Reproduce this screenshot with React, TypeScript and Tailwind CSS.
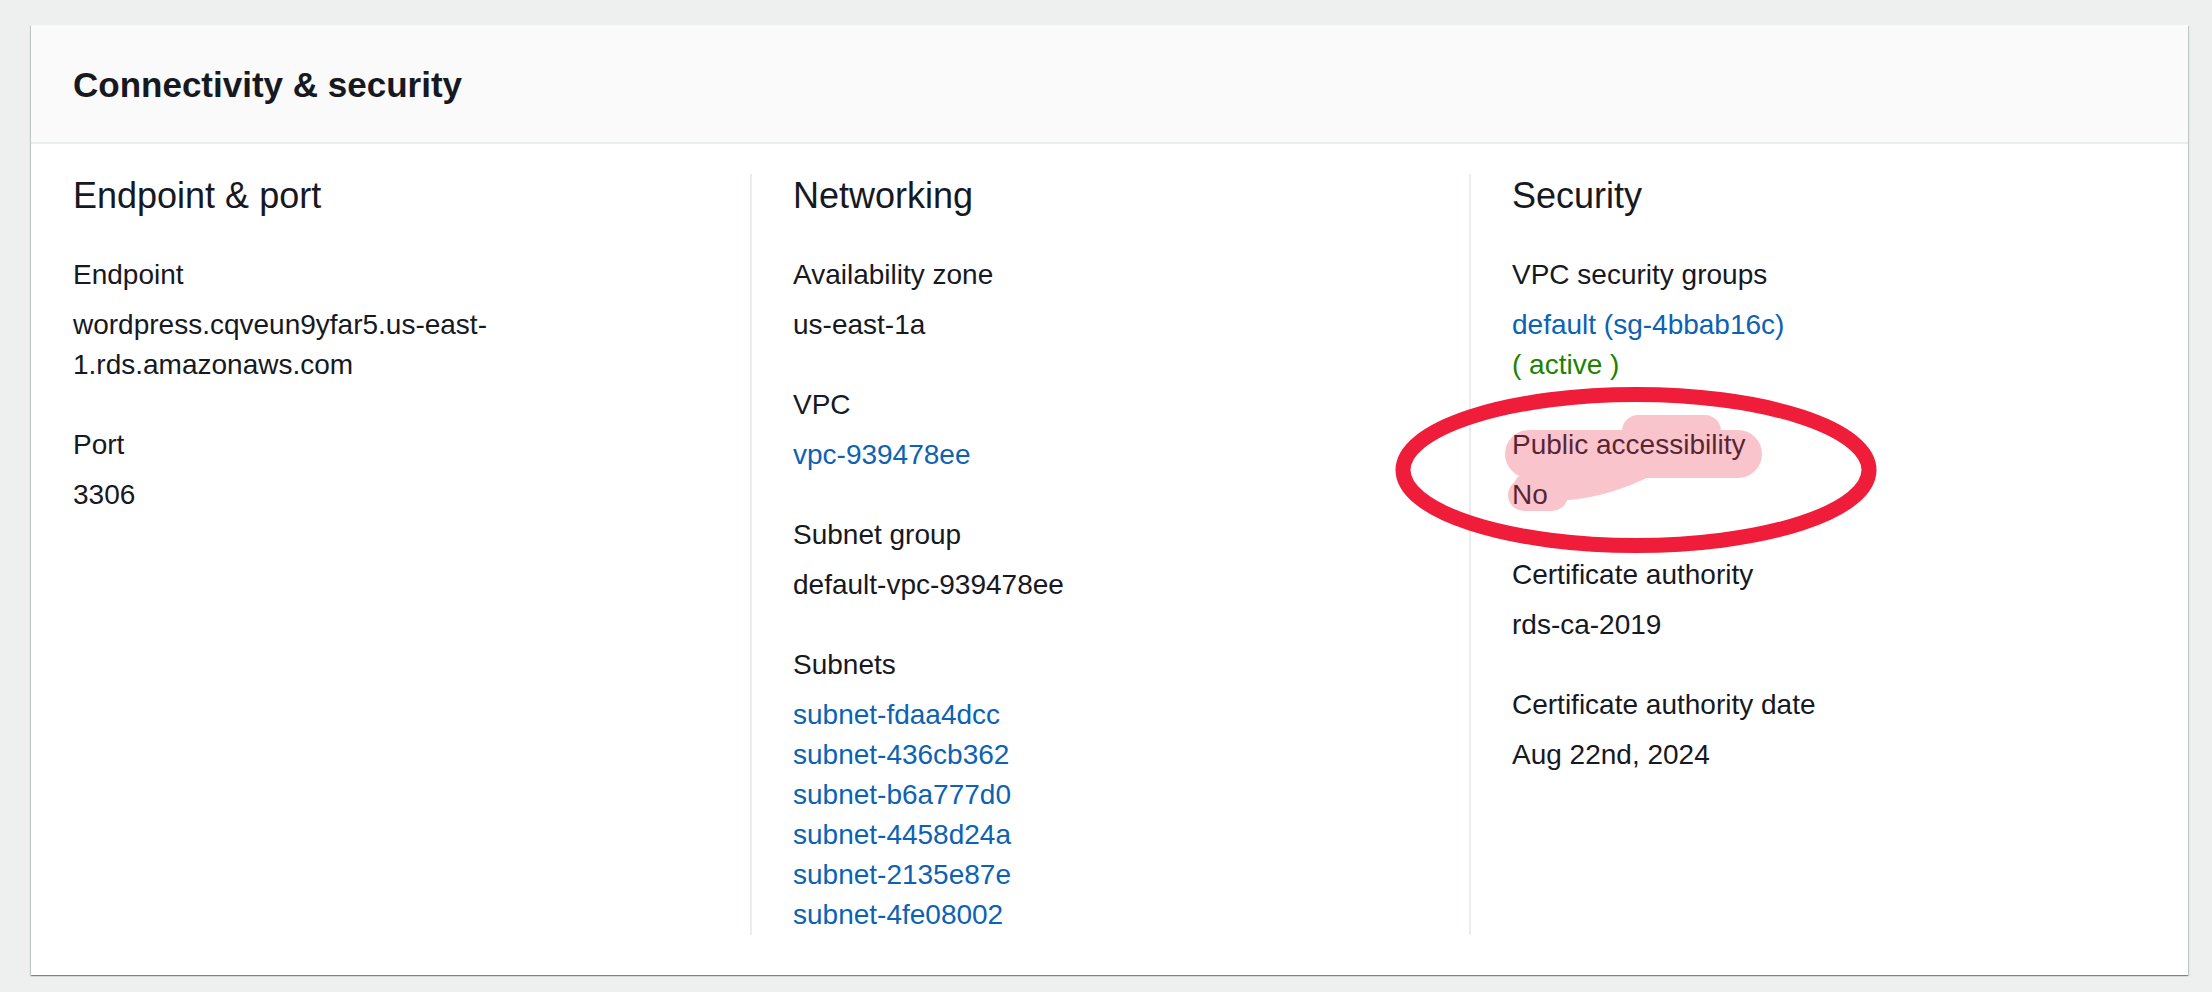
const font = { fontFamily: '"Liberation Sans", Arial, sans-serif' };

type Item = { label: string; values: { text: string; kind?: "link" | "ok" }[] };

const columns: { title: string; items: Item[] }[] = [
  {
    title: "Endpoint & port",
    items: [
      { label: "Endpoint", values: [{ text: "wordpress.cqveun9yfar5.us-east-1.rds.amazonaws.com" }] },
      { label: "Port", values: [{ text: "3306" }] },
    ],
  },
  {
    title: "Networking",
    items: [
      { label: "Availability zone", values: [{ text: "us-east-1a" }] },
      { label: "VPC", values: [{ text: "vpc-939478ee", kind: "link" }] },
      { label: "Subnet group", values: [{ text: "default-vpc-939478ee" }] },
      {
        label: "Subnets",
        values: [
          { text: "subnet-fdaa4dcc", kind: "link" },
          { text: "subnet-436cb362", kind: "link" },
          { text: "subnet-b6a777d0", kind: "link" },
          { text: "subnet-4458d24a", kind: "link" },
          { text: "subnet-2135e87e", kind: "link" },
          { text: "subnet-4fe08002", kind: "link" },
        ],
      },
    ],
  },
  {
    title: "Security",
    items: [
      {
        label: "VPC security groups",
        values: [
          { text: "default (sg-4bbab16c)", kind: "link" },
          { text: "( active )", kind: "ok" },
        ],
      },
      { label: "Public accessibility", values: [{ text: "No" }] },
      { label: "Certificate authority", values: [{ text: "rds-ca-2019" }] },
      { label: "Certificate authority date", values: [{ text: "Aug 22nd, 2024" }] },
    ],
  },
];

function Value({ text, kind }: { text: string; kind?: "link" | "ok" }) {
  if (kind === "link") {
    return (
      <div>
        <a href="#" className="text-[#0d62b3] no-underline">
          {text}
        </a>
      </div>
    );
  }
  if (kind === "ok") return <div className="text-[#1d8102]">{text}</div>;
  return <div>{text}</div>;
}

// hand-drawn annotation on top of the screenshot
function Annotation() {
  return (
    <svg className="pointer-events-none absolute left-0 top-0" width="2212" height="992">
      <g opacity="0.3" stroke="#f0405e" strokeLinecap="round" fill="none">
        <line x1="1529" y1="454" x2="1738" y2="454" strokeWidth="48" />
        <line x1="1638" y1="431" x2="1705" y2="431" strokeWidth="32" />
        <line x1="1524" y1="495" x2="1552" y2="495" strokeWidth="32" />
        <path d="M1526 486 Q1580 496 1640 468" strokeWidth="24" />
      </g>
      <ellipse cx="1636" cy="470" rx="233" ry="75.5" fill="none" stroke="#ef1c3a" strokeWidth="15" />
    </svg>
  );
}

export default function App() {
  return (
    <div className="relative min-h-screen bg-[#eef0ef] pt-[25px] pl-[31px] pr-[24px] text-[#16191f]" style={font}>
      <div className="bg-white shadow-[0_1px_1px_0_rgba(0,28,36,0.3),1px_1px_1px_0_rgba(0,28,36,0.15),-1px_1px_1px_0_rgba(0,28,36,0.15)]">
        <div className="border-b-2 border-[#eaeded] bg-[#fafafa] px-[42px] pt-[38px] pb-[35px]">
          <h2 className="text-[35px] font-bold leading-[44px]">Connectivity &amp; security</h2>
        </div>
        <div className="grid grid-cols-3 pt-[30px] pb-[40px]">
          {columns.map((col, i) => (
            <div
              key={col.title}
              className={i === 0 ? "pl-[42px] pr-[42px]" : "border-l-2 border-[#eaeded] pl-[41px] pr-[42px]"}
            >
              <h3 className="text-[36px] font-normal leading-[44px]">{col.title}</h3>
              <div className="mt-[37px] flex flex-col gap-[40px] text-[28px] leading-[40px]">
                {col.items.map((item) => (
                  <div key={item.label}>
                    <div>{item.label}</div>
                    <div className="mt-[10px]">
                      {item.values.map((v) => (
                        <Value key={v.text} text={v.text} kind={v.kind} />
                      ))}
                    </div>
                  </div>
                ))}
              </div>
            </div>
          ))}
        </div>
      </div>
      <Annotation />
    </div>
  );
}
